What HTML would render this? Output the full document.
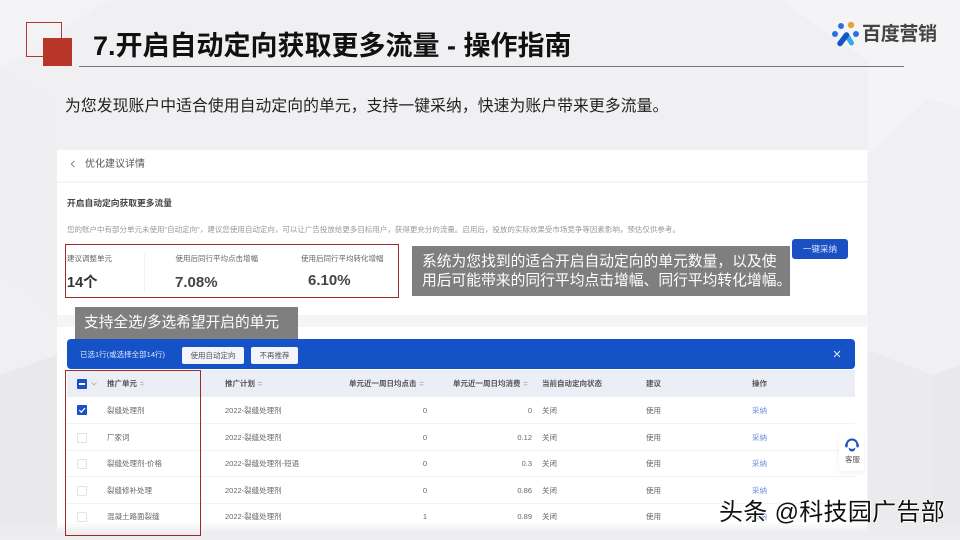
<!DOCTYPE html>
<html lang="zh"><head><meta charset="utf-8"><style>
html,body{margin:0;padding:0}
#p{position:relative;width:960px;height:540px;overflow:hidden;background:#f0f0f2;font-family:"Liberation Sans","Noto Sans CJK SC",sans-serif;color:#333}
#p div{position:absolute;white-space:nowrap}
.h{font-size:7.5px;font-weight:700;color:#555;line-height:12px}
.c{font-size:7.5px;color:#666;line-height:12px}
.r{text-align:right;width:60px}
.l{left:67px;width:788px;height:1px;background:#f2f2f4}
.cb{left:77px;width:8px;height:8px;border:1px solid #e3e3e6;border-radius:1px;background:#fff}
.lnk{color:#6a8bd6 !important}
.s{font-size:7px;color:#aaa;font-weight:400}
</style></head><body><div id="p">
<svg width="960" height="540" style="position:absolute;left:0;top:0">
<polygon points="0,0 110,0 0,70" fill="#f3f3f5"/>
<polygon points="780,0 960,0 960,108 928,98 868,155 868,60" fill="#f4f4f6"/>
<polygon points="868,350 933,375 933,540 868,540" fill="#ebebed"/>
<polygon points="933,375 960,365 960,540 933,540" fill="#e9e9eb"/>
<polygon points="0,375 57,355 57,540 0,540" fill="#e9e9eb"/>
<polygon points="0,70 57,100 57,320 0,270" fill="#efeff1"/>
</svg>
<div style="left:26px;top:22px;width:34px;height:33px;border:1px solid #b03a2e"></div>
<div style="left:43px;top:38px;width:29px;height:28px;background:#b8352a"></div>
<div style="left:93px;top:28px;font-size:27px;font-weight:700;color:#111;line-height:36px">7.开启自动定向获取更多流量 - 操作指南</div>
<div style="left:79px;top:66px;width:825px;height:1px;background:#77777b"></div>
<svg width="34" height="28" viewBox="0 0 34 28" style="position:absolute;left:830px;top:20px">
<circle cx="11" cy="6" r="3" fill="#2f6fd8"/><circle cx="21" cy="5" r="3.200" fill="#e8a23c"/>
<circle cx="5" cy="14" r="3" fill="#2f6fd8"/><circle cx="26" cy="14" r="3" fill="#2f6fd8"/>
<path d="M16.500 15L21.500 23" stroke="#35a8ee" stroke-width="5" stroke-linecap="round" fill="none"/>
<path d="M10 23.500L16.500 15" stroke="#1554c4" stroke-width="5.500" stroke-linecap="round" fill="none"/>
</svg>
<div style="left:862px;top:23px;font-size:19px;font-weight:700;color:#444;line-height:24px;letter-spacing:-.3px">百度营销</div>
<div style="left:65px;top:96px;font-size:15.8px;color:#222;line-height:22px;letter-spacing:.08px">为您发现账户中适合使用自动定向的单元，支持一键采纳，快速为账户带来更多流量。</div>

<div style="left:0;top:0;width:960px;height:540px;filter:blur(.35px)">
<div style="left:57px;top:150px;width:811px;height:390px;background:#f4f5f7"></div>
<div style="left:57px;top:150px;width:810px;height:31px;background:#fff"></div>
<div style="left:57px;top:183px;width:810px;height:132px;background:#fff"></div>
<div style="left:57px;top:327px;width:810px;height:213px;background:#fff"></div>
<svg width="6" height="8" style="position:absolute;left:70px;top:160px"><path d="M4.500 .8L1.300 4L4.500 7.200" stroke="#777" fill="none" stroke-width=".9"/></svg>
<div style="left:85px;top:158px;font-size:10px;color:#555;line-height:13px">优化建议详情</div>
<div style="left:67px;top:197px;font-size:8.750px;font-weight:700;color:#444;line-height:12px">开启自动定向获取更多流量</div>
<div style="left:67px;top:224px;font-size:7.500px;color:#999;line-height:11px">您的账户中有部分单元未使用"自动定向"，建议您使用自动定向，可以让广告投放给更多目标用户，获得更充分的流量。启用后，投放的实际效果受市场竞争等因素影响，预估仅供参考。</div>

<div style="left:144px;top:254px;width:1px;height:38px;background:#f0f0f2"></div>
<div class="c" style="left:67px;top:253px;">建议调整单元</div>
<div class="c" style="left:175.500px;top:253px;">使用后同行平均点击增幅</div>
<div class="c" style="left:301px;top:253px;">使用后同行平均转化增幅</div>
<div style="left:67px;top:274px;font-size:14.500px;font-weight:700;color:#333;line-height:18px">14个</div>
<div style="left:175px;top:274px;font-size:15px;font-weight:700;color:#444;line-height:18px">7.08%</div>
<div style="left:308px;top:272px;font-size:15px;font-weight:700;color:#444;line-height:18px">6.10%</div>

<div style="left:792px;top:239px;width:56px;height:20px;background:#1a50c4;border-radius:3px;color:#dfe8fb;font-size:8.500px;line-height:20px;text-align:center">一键采纳</div>

<div style="left:67px;top:339px;width:788px;height:30px;background:#1552c7;border-radius:4px"></div>
<div style="left:80px;top:349px;font-size:7.500px;color:#dce6fa;line-height:12px">已选1行(或选择全部14行)</div>
<div style="left:182px;top:347px;width:62px;height:17px;background:#f3f5fa;border-radius:2px;color:#555;font-size:7.500px;line-height:17px;text-align:center">使用自动定向</div>
<div style="left:251px;top:347px;width:47px;height:17px;background:#f3f5fa;border-radius:2px;color:#555;font-size:7.500px;line-height:17px;text-align:center">不再推荐</div>
<svg width="8" height="8" style="position:absolute;left:833px;top:350px"><path d="M1 1L7 7M7 1L1 7" stroke="#e8eefb" stroke-width="1"/></svg>

<div style="left:67px;top:370px;width:788px;height:27px;background:#ebeef5"></div>
<div style="left:77px;top:379px;width:10px;height:10px;background:#1a50c4;border-radius:1px"></div>
<div style="left:79px;top:383px;width:6px;height:2px;background:#fff"></div>
<svg width="6" height="4" style="position:absolute;left:91px;top:382px"><path d="M.5 .5L3 3L5.500 .5" stroke="#aab" fill="none" stroke-width=".8"/></svg>
<div class="h" style="left:107px;top:378px">推广单元 <span class="s">≑</span></div>
<div class="h" style="left:225px;top:378px">推广计划 <span class="s">≑</span></div>
<div class="h" style="left:349px;top:378px">单元近一周日均点击 <span class="s">≑</span></div>
<div class="h" style="left:453px;top:378px">单元近一周日均消费 <span class="s">≑</span></div>
<div class="h" style="left:542px;top:378px">当前自动定向状态</div>
<div class="h" style="left:646px;top:378px">建议</div>
<div class="h" style="left:752px;top:378px">操作</div>

<div class="l" style="top:423px"></div><div class="l" style="top:450px"></div><div class="l" style="top:476px"></div><div class="l" style="top:503px"></div>

<div style="left:77px;top:405px;width:10px;height:10px;background:#1a50c4;border-radius:1px"></div>
<svg width="10" height="10" style="position:absolute;left:77px;top:405px"><path d="M2.200 5L4.300 7.200L8 3" stroke="#fff" fill="none" stroke-width="1.200"/></svg>
<div class="c" style="left:107px;top:405px">裂缝处理剂</div><div class="c" style="left:225px;top:405px">2022-裂缝处理剂</div>
<div class="c r" style="left:367px;top:405px">0</div><div class="c r" style="left:472px;top:405px">0</div>
<div class="c" style="left:542px;top:405px">关闭</div><div class="c" style="left:646px;top:405px">使用</div><div class="c lnk" style="left:752px;top:405px">采纳</div>

<div class="cb" style="top:433px"></div>
<div class="c" style="left:107px;top:432px">厂家词</div><div class="c" style="left:225px;top:432px">2022-裂缝处理剂</div>
<div class="c r" style="left:367px;top:432px">0</div><div class="c r" style="left:472px;top:432px">0.12</div>
<div class="c" style="left:542px;top:432px">关闭</div><div class="c" style="left:646px;top:432px">使用</div><div class="c lnk" style="left:752px;top:432px">采纳</div>

<div class="cb" style="top:459px"></div>
<div class="c" style="left:107px;top:458px">裂缝处理剂-价格</div><div class="c" style="left:225px;top:458px">2022-裂缝处理剂-短语</div>
<div class="c r" style="left:367px;top:458px">0</div><div class="c r" style="left:472px;top:458px">0.3</div>
<div class="c" style="left:542px;top:458px">关闭</div><div class="c" style="left:646px;top:458px">使用</div><div class="c lnk" style="left:752px;top:458px">采纳</div>

<div class="cb" style="top:486px"></div>
<div class="c" style="left:107px;top:485px">裂缝修补处理</div><div class="c" style="left:225px;top:485px">2022-裂缝处理剂</div>
<div class="c r" style="left:367px;top:485px">0</div><div class="c r" style="left:472px;top:485px">0.86</div>
<div class="c" style="left:542px;top:485px">关闭</div><div class="c" style="left:646px;top:485px">使用</div><div class="c lnk" style="left:752px;top:485px">采纳</div>

<div class="cb" style="top:512px"></div>
<div class="c" style="left:107px;top:511px">混凝土路面裂缝</div><div class="c" style="left:225px;top:511px">2022-裂缝处理剂</div>
<div class="c r" style="left:367px;top:511px">1</div><div class="c r" style="left:472px;top:511px">0.89</div>
<div class="c" style="left:542px;top:511px">关闭</div><div class="c" style="left:646px;top:511px">使用</div><div class="c lnk" style="left:752px;top:511px">采纳</div>

<div style="left:839px;top:433px;width:25px;height:38px;background:#fff;border-radius:4px;box-shadow:0 2px 6px rgba(0,0,0,.06)"></div>
<svg width="16" height="16" viewBox="0 0 16 16" style="position:absolute;left:844px;top:437px"><path d="M3 9.500A5.300 5.300 0 1 1 13 9.500" stroke="#1a50c4" stroke-width="2" fill="none"/><rect x="1.200" y="6.500" width="2.300" height="4" rx="1" fill="#1a50c4"/><rect x="12.500" y="6.500" width="2.300" height="4" rx="1" fill="#1a50c4"/><path d="M4.500 10.500Q8 13.500 11.500 10.500Q11 14.500 8 14.500Q5 14.500 4.500 10.500Z" fill="#1a50c4"/></svg>
<div style="left:845px;top:454px;font-size:7.500px;color:#555;line-height:12px">客服</div>
</div>

<div style="left:0;top:522px;width:960px;height:18px;background:linear-gradient(rgba(238,238,240,0),#ededef 60%)"></div>
<div style="left:65px;top:244px;width:332px;height:52px;border:1px solid #9c2a2a"></div>
<div style="left:65px;top:370px;width:134px;height:164px;border:1px solid #9c2a2a"></div>
<div style="left:412px;top:246px;width:378px;height:50px;background:#7f7f7f"></div>
<div style="left:422px;top:253px;font-size:14.750px;color:#fff;line-height:19px;letter-spacing:.02px">系统为您找到的适合开启自动定向的单元数量，以及使<br>用后可能带来的同行平均点击增幅、同行平均转化增幅。</div>
<div style="left:75px;top:307px;width:223px;height:32px;background:#7f7f7f;color:#fff;font-size:14.700px;line-height:32px;text-indent:9px">支持全选/多选希望开启的单元</div>
<div style="left:719px;top:498px;font-size:24px;color:#111;line-height:30px;letter-spacing:.3px;text-shadow:1px 1px 0 #fff,-1px 0 0 #fff,0 -1px 0 #fff">头条 @科技园广告部</div>
</div></body></html>
